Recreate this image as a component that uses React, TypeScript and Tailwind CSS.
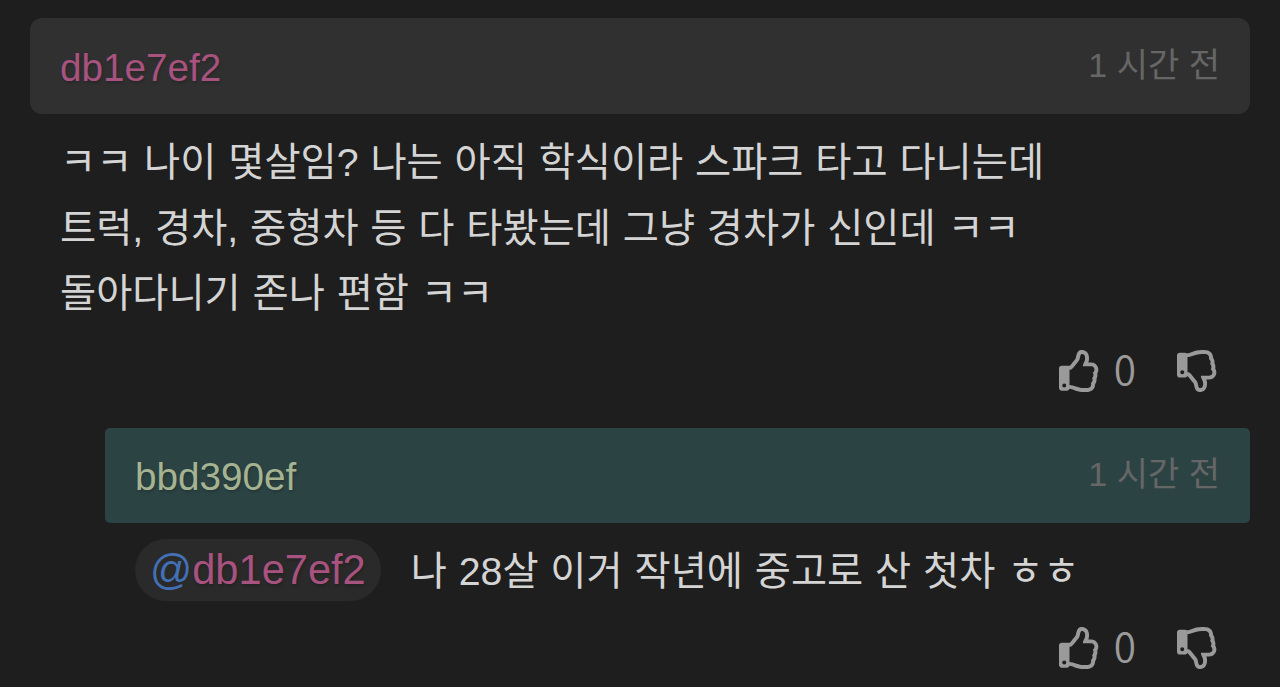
import { FaRegThumbsDown, FaRegThumbsUp } from "react-icons/fa";

interface Comentario {
  id: string;
  autor: string;
  hora: string;
  mencion?: string;
  lineas: string[];
  votos: number;
  respuesta: boolean;
}

const comentarios: Comentario[] = [
  {
    id: "1",
    autor: "db1e7ef2",
    hora: "1 시간 전",
    lineas: [
      "ㅋㅋ 나이 몇살임? 나는 아직 학식이라 스파크 타고 다니는데",
      "트럭, 경차, 중형차 등 다 타봤는데 그냥 경차가 신인데 ㅋㅋ",
      "돌아다니기 존나 편함 ㅋㅋ",
    ],
    votos: 0,
    respuesta: false,
  },
  {
    id: "2",
    autor: "bbd390ef",
    hora: "1 시간 전",
    mencion: "db1e7ef2",
    lineas: ["나 28살 이거 작년에 중고로 산 첫차 ㅎㅎ"],
    votos: 0,
    respuesta: true,
  },
];

function Cabecera({ comentario }: { comentario: Comentario }) {
  return (
    <header
      className={`flex items-center justify-between px-[30px] ${
        comentario.respuesta ? "h-[95px] rounded-[5px] bg-[#2c4344]" : "h-[96px] rounded-[12px] bg-[#303030]"
      }`}
    >
      <span
        className={`pt-[4px] text-[38.7px] leading-none [text-shadow:1px_2px_3px_rgba(0,0,0,0.2)] ${
          comentario.respuesta ? "text-[#a5b391]" : "text-[#a8527f]"
        }`}
      >
        {comentario.autor}
      </span>
      <time className="pb-[2px] text-[34px] leading-none text-[#666666]">{comentario.hora}</time>
    </header>
  );
}

function Votos({ total }: { total: number }) {
  return (
    <div className="flex h-[46px] items-center justify-end pr-[31px] text-[#9a9a9a]">
      <button className="flex items-center gap-[13px]">
        <FaRegThumbsUp size={42} />
        <span className="pb-[5px] font-['Noto_Sans_CJK_KR',sans-serif] text-[40.5px] leading-none font-[350]">
          {total}
        </span>
      </button>
      <button className="ml-[41px]">
        <FaRegThumbsDown size={42} />
      </button>
    </div>
  );
}

export default function App() {
  return (
    <main className="h-[687px] overflow-hidden bg-[#1e1e1e] pt-[18px] pr-[30px] pl-[30px] font-['Liberation_Sans','Noto_Sans_CJK_KR',sans-serif]">
      {comentarios.map((c) => (
        <article key={c.id} className={c.respuesta ? "mt-[34px] ml-[75px]" : ""}>
          <Cabecera comentario={c} />
          {c.mencion ? (
            <div className="mt-[16px] mb-[24px] flex h-[62px] items-center pl-[30px]">
              <span className="mr-[30px] flex h-[62px] items-center rounded-full bg-[#2a2a2a] px-[15px] text-[41.6px] leading-none text-[#a8527f]">
                <span className="text-[#4270b5]">@</span>
                <span className="[text-shadow:1px_2px_3px_rgba(0,0,0,0.2)]">{c.mencion}</span>
              </span>
              <p className="pt-[4px] text-[39.3px] leading-none [word-spacing:0.9px] whitespace-nowrap text-[#d4d4d4]">
                {c.lineas[0]}
              </p>
            </div>
          ) : (
            <div className="mt-[16px] mb-[21px] pl-[30px] text-[39.3px] leading-[65.6px] [word-spacing:0.9px] whitespace-nowrap text-[#d4d4d4]">
              {c.lineas.map((linea) => (
                <p key={linea}>{linea}</p>
              ))}
            </div>
          )}
          <Votos total={c.votos} />
        </article>
      ))}
    </main>
  );
}
